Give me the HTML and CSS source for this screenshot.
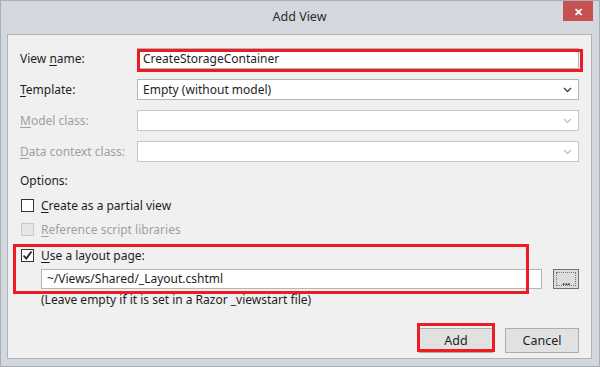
FILE: index.html
```html
<!DOCTYPE html>
<html lang="en">
<head>
    <meta charset="UTF-8">
    <title>Add View</title>
    <link rel="stylesheet" href="styles.css">
</head>
<body>
    <div class="window">
        <div class="titlebar">
            <span class="title">Add View</span>
            <span class="close">&#x2715;</span>
        </div>
        <div class="panel">
            <div class="fields">
                <label class="label">View <u>n</u>ame:</label>
                <div class="textbox">CreateStorageContainer</div>

                <label class="label"><u>T</u>emplate:</label>
                <div class="combo">
                    <span>Empty (without model)</span>
                    <svg class="chev" width="9" height="6" viewBox="0 0 9 6"><path d="M1 1l3.5 3.5L8 1" fill="none" stroke="#444" stroke-width="1.4"/></svg>
                </div>

                <label class="label disabled"><u>M</u>odel class:</label>
                <div class="combo off">
                    <span></span>
                    <svg class="chev" width="9" height="6" viewBox="0 0 9 6"><path d="M1 1l3.5 3.5L8 1" fill="none" stroke="#bbb" stroke-width="1.2"/></svg>
                </div>

                <label class="label disabled"><u>D</u>ata context class:</label>
                <div class="combo off">
                    <span></span>
                    <svg class="chev" width="9" height="6" viewBox="0 0 9 6"><path d="M1 1l3.5 3.5L8 1" fill="none" stroke="#bbb" stroke-width="1.2"/></svg>
                </div>
            </div>

            <div class="options">Options:</div>
            <div class="check-row first">
                <span class="box"></span>
                <span><u>C</u>reate as a partial view</span>
            </div>
            <div class="check-row disabled">
                <span class="box off"></span>
                <span><u>R</u>eference script libraries</span>
            </div>
            <div class="check-row last">
                <span class="box">
                    <svg width="11" height="11" viewBox="0 0 11 11"><path d="M1.5 5.5l2.8 3L9.5 1.5" fill="none" stroke="#222" stroke-width="1.8"/></svg>
                </span>
                <span><u>U</u>se a layout page:</span>
            </div>
            <div class="layout-row">
                <div class="layout-input">~/Views/Shared/_Layout.cshtml</div>
                <div class="browse"><span>...</span></div>
            </div>
            <div class="hint">(Leave empty if it is set in a Razor _viewstart file)</div>

            <div class="buttons">
                <div class="btn">Add</div>
                <div class="btn">Cancel</div>
            </div>
        </div>

        <!-- red annotation boxes -->
        <div class="mark mark-name"></div>
        <div class="mark mark-layout"></div>
        <div class="mark mark-add"></div>
    </div>
</body>
</html>
```

FILE: styles.css
```css
body {
    margin: 0;
    font-family: "Segoe UI", "Noto Sans", "Open Sans", sans-serif;
    font-size: 12px;
    color: #1e1e1e;
}
u {
    text-decoration: underline;
    text-underline-offset: 2px;
}
.window {
    position: relative;
    width: 600px;
    height: 367px;
    box-sizing: border-box;
    background-color: #d3d8de;
    border: 1px solid #a9afb6;
    padding: 0 7px 7px 6px;
}
.titlebar {
    height: 33px;
    display: flex;
    align-items: center;
    justify-content: center;
    position: relative;
}
.title {
    font-size: 12.5px;
    color: #2b2b2b;
    margin-top: -2px;
}
.close {
    position: absolute;
    right: -1px;
    top: 0;
    width: 30px;
    height: 20px;
    background-color: #c75050;
    color: white;
    font-size: 11px;
    font-weight: bold;
    display: flex;
    align-items: center;
    justify-content: center;
}
.panel {
    background-color: #f0f0f0;
    border: 1px solid #aeb3b9;
    height: 325px;
    box-sizing: border-box;
    padding: 13px 12px 0 12px;
}
.fields {
    display: grid;
    grid-template-columns: 117px 1fr;
    row-gap: 10px;
    align-items: center;
}
.label {
    line-height: 21px;
}
.disabled {
    color: #a0a0a0;
}
.textbox, .combo {
    height: 21px;
    box-sizing: border-box;
    background: white;
    border: 1px solid #b5b5b5;
    padding: 0 5px;
    line-height: 19px;
}
.combo {
    display: flex;
    align-items: center;
    justify-content: space-between;
    padding-right: 6px;
}
.combo.off {
    border-color: #c6c6c6;
}
.chev {
    display: block;
}
.options {
    margin-top: 11px;
    line-height: 16px;
}
.check-row {
    display: flex;
    align-items: center;
    gap: 7px;
    height: 24px;
    margin-left: 1px;
}
.check-row.first {
    margin-top: 4px;
}
.check-row.last {
    margin-top: 2px;
}
.box {
    width: 13px;
    height: 13px;
    box-sizing: border-box;
    border: 1px solid #333;
    background: white;
    display: flex;
    align-items: center;
    justify-content: center;
}
.box.off {
    border-color: #c8c8c8;
    background: #e6e6e6;
}
.layout-row {
    display: flex;
    align-items: center;
    gap: 11px;
    margin: 2px 0 0 21px;
}
.layout-input {
    width: 501px;
    height: 20px;
    box-sizing: border-box;
    background: white;
    border: 1px solid #b5b5b5;
    padding: 0 5px;
    line-height: 18px;
}
.browse {
    width: 26px;
    height: 20px;
    box-sizing: border-box;
    background: #dddddd;
    border: 1px solid #707070;
    padding: 2px;
}
.browse span {
    display: block;
    height: 100%;
    box-sizing: border-box;
    border: 1px dotted #777;
    text-align: center;
    line-height: 16px;
    font-size: 11px;
    font-weight: bold;
    color: #333;
    letter-spacing: -0.5px;
}
.hint {
    margin: 3px 0 0 21px;
    line-height: 16px;
}
.buttons {
    display: flex;
    justify-content: flex-end;
    gap: 12px;
    margin-top: 20px;
}
.btn {
    width: 74px;
    height: 25px;
    box-sizing: border-box;
    background: #e1e1e1;
    border: 1px solid #adadad;
    text-align: center;
    line-height: 23px;
    font-size: 12.5px;
}
.mark {
    position: absolute;
    border: 3px solid #ed1c24;
    box-sizing: border-box;
}
.mark-name {
    left: 136px;
    top: 48px;
    width: 446px;
    height: 23px;
}
.mark-layout {
    left: 12px;
    top: 243px;
    width: 516px;
    height: 50px;
}
.mark-add {
    left: 416px;
    top: 322px;
    width: 78px;
    height: 29px;
}
```
